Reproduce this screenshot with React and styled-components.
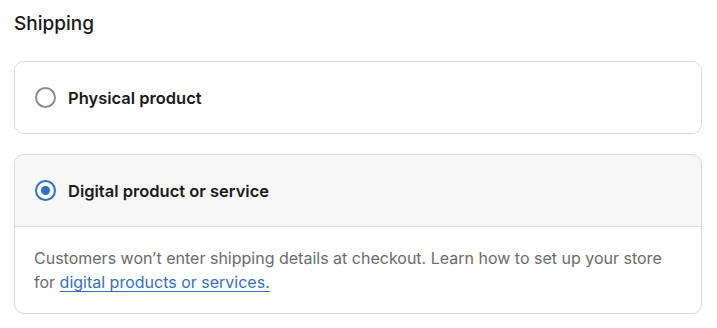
import React, { useState } from 'react'
import styled, { createGlobalStyle } from 'styled-components'

const Global = createGlobalStyle`
  body {
    margin: 0;
    background: #fff;
    font-family: Inter, "Liberation Sans", sans-serif;
    color: #202223;
  }
`

const Page = styled.div`
  padding: 10px 15px 0 14px;
  display: flex;
  flex-direction: column;
`

const Title = styled.h2`
  margin: 0 0 24px;
  font-size: 19px;
  line-height: 27px;
  font-weight: 500;
  color: #1a1a1a;
`

const Options = styled.div`
  display: flex;
  flex-direction: column;
  gap: 20px;
`

const Card = styled.div`
  border: 1px solid #d9d9d9;
  border-radius: 10px;
  overflow: hidden;
  background: #fff;
`

const Header = styled.label`
  display: flex;
  align-items: center;
  gap: 12px;
  height: 71px;
  padding: 0 20px;
  background: ${({ selected }) => (selected ? '#f8f8f8' : '#fff')};
  border-bottom: ${({ selected }) => (selected ? '1px solid #dcdcdc' : 'none')};
  cursor: pointer;
`

const Radio = styled.span`
  box-sizing: border-box;
  width: 21px;
  height: 21px;
  border-radius: 50%;
  border: 2px solid ${({ checked }) => (checked ? '#2f6fc4' : '#8a8a8a')};
  display: flex;
  align-items: center;
  justify-content: center;

  &::after {
    content: '';
    width: 9px;
    height: 9px;
    border-radius: 50%;
    background: ${({ checked }) => (checked ? '#2f6fc4' : 'transparent')};
  }
`

const Label = styled.span`
  font-size: 16.5px;
  font-weight: 600;
  color: #1a1a1a;
`

const Body = styled.div`
  padding: 19px 24px 19px 19px;
  font-size: 16px;
  line-height: 24px;
  color: #6b6b6b;
`

const Link = styled.a`
  color: #3a6fb7;
  text-decoration: underline;
  text-underline-offset: 3px;
`

export default function App() {
  const [choice, setChoice] = useState('digital')

  return (
    <>
      <Global />
      <Page>
        <Title>Shipping</Title>
        <Options>
          <Card>
            <Header selected={choice === 'physical'} onClick={() => setChoice('physical')}>
              <Radio checked={choice === 'physical'} />
              <Label>Physical product</Label>
            </Header>
          </Card>
          <Card>
            <Header selected={choice === 'digital'} onClick={() => setChoice('digital')}>
              <Radio checked={choice === 'digital'} />
              <Label>Digital product or service</Label>
            </Header>
            {choice === 'digital' && (
              <Body>
                Customers won’t enter shipping details at checkout. Learn how to set up your store
                for <Link href="#">digital products or services.</Link>
              </Body>
            )}
          </Card>
        </Options>
      </Page>
    </>
  )
}
